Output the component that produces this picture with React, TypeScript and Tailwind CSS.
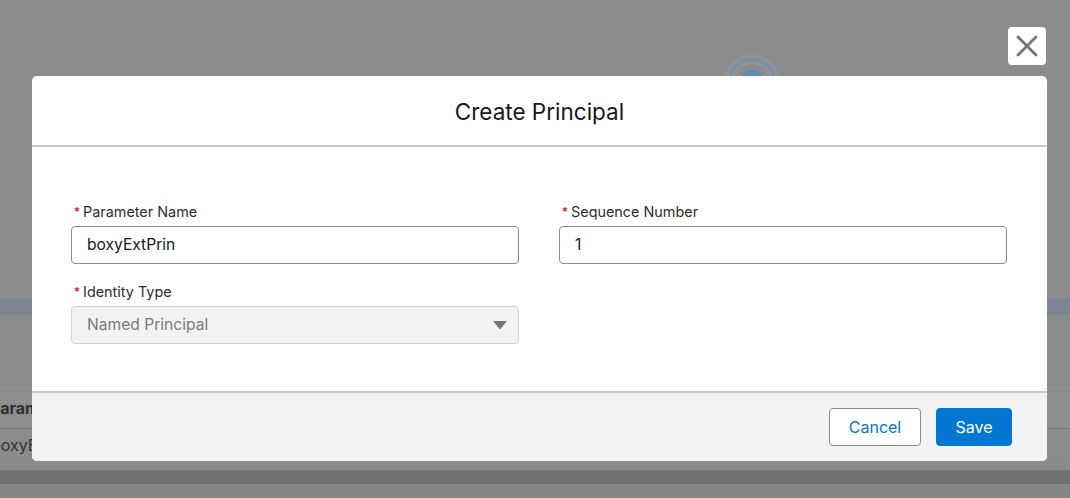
import React from "react";

const font = { fontFamily: "Inter, 'Noto Sans', sans-serif" };

function Spinner() {
  return (
    <svg width="80" height="60" viewBox="0 0 80 60" className="absolute left-[712px] top-[42px]">
      <circle cx="40" cy="40" r="26" fill="none" stroke="#8197aa" strokeWidth="3" />
      <circle cx="40" cy="40" r="19.5" fill="none" stroke="#7d97ae" strokeWidth="3" />
      <circle cx="40" cy="40" r="12" fill="#628aaf" />
    </svg>
  );
}

function Label({ text }: { text: string }) {
  return (
    <div className="flex items-center h-[18px] mb-[5px] text-[14.4px] text-[#2e2e2e]">
      <abbr className="no-underline text-[#ba0517] text-[12px] ml-[3px] mr-[3px] leading-none">*</abbr>
      <span>{text}</span>
    </div>
  );
}

function TextField({ label, value }: { label: string; value: string }) {
  return (
    <div className="flex flex-col">
      <Label text={label} />
      <div className="h-[38px] rounded-[4px] border border-[#8c8c8c] bg-white flex items-center pl-[15px] text-[15.6px] text-[#181818]">
        {value}
      </div>
    </div>
  );
}

function SelectField({ label, value }: { label: string; value: string }) {
  return (
    <div className="flex flex-col">
      <Label text={label} />
      <div className="h-[38px] rounded-[4px] border border-[#d4d4d4] bg-[#f3f3f3] flex items-center justify-between pl-[15px] pr-[11px] text-[15.6px] text-[#7a7a7a]">
        <span>{value}</span>
        <svg width="14" height="9" viewBox="0 0 14 9">
          <path d="M0 0 H14 L7 8.5 Z" fill="#747474" />
        </svg>
      </div>
    </div>
  );
}

export default function App() {
  return (
    <div className="relative w-[1070px] h-[498px] overflow-hidden bg-[#8c8c8c]" style={font}>
      {/* page behind the backdrop */}
      <div className="flex flex-col">
        <div className="h-[298px]" />
        <div className="h-[17px] bg-[#7d8593]" />
        <div className="h-[72px]" />
        <div className="h-[1px] bg-[#939393]" />
        <div className="h-[41px] flex items-center border-b border-[#7a7a7a] bg-[#8e8e8e]">
          <span className="ml-[-10px] text-[16px] font-bold text-[#2f2f2f] whitespace-nowrap">Parameter Name</span>
        </div>
        <div className="h-[32px] flex items-center">
          <span className="ml-[-9px] text-[16px] text-[#333333] whitespace-nowrap">boxyExtPrin</span>
        </div>
        <div className="h-[9px] bg-[#8a8a8a]" />
        <div className="h-[14px] bg-[#727272]" />
        <div className="h-[14px] bg-[#868686]" />
      </div>

      <Spinner />

      {/* close button */}
      <button className="absolute left-[1008px] top-[27px] w-[38px] h-[38px] rounded-[4px] bg-white flex items-center justify-center">
        <svg width="22" height="22" viewBox="0 0 22 22">
          <path d="M2 2 L20 20 M20 2 L2 20" stroke="#747474" strokeWidth="2.8" strokeLinecap="round" />
        </svg>
      </button>

      {/* modal */}
      <div className="absolute left-[32px] top-[76px] w-[1015px] h-[385px] rounded-[5px] bg-white overflow-hidden flex flex-col">
        <div className="h-[71px] flex items-center justify-center border-b-2 border-[#c9c9c9] text-[22.5px] text-[#181818] pt-[3px]">
          Create Principal
        </div>
        <div className="flex-1 pl-[39px] pr-[40px] pt-[56px]">
          <div className="grid grid-cols-2 gap-x-[40px] gap-y-[19px]">
            <TextField label="Parameter Name" value="boxyExtPrin" />
            <TextField label="Sequence Number" value="1" />
            <SelectField label="Identity Type" value="Named Principal" />
          </div>
        </div>
        <div className="h-[70px] border-t-2 border-[#c9c9c9] bg-[#f3f3f3] flex items-center justify-end gap-[15px] pr-[35px]">
          <button className="h-[38px] w-[92px] rounded-[4px] border border-[#8c8c8c] bg-white text-[16px] text-[#0176d3]">
            Cancel
          </button>
          <button className="h-[38px] w-[76px] rounded-[4px] border border-[#0176d3] bg-[#0176d3] text-[16px] text-white">
            Save
          </button>
        </div>
      </div>
    </div>
  );
}
